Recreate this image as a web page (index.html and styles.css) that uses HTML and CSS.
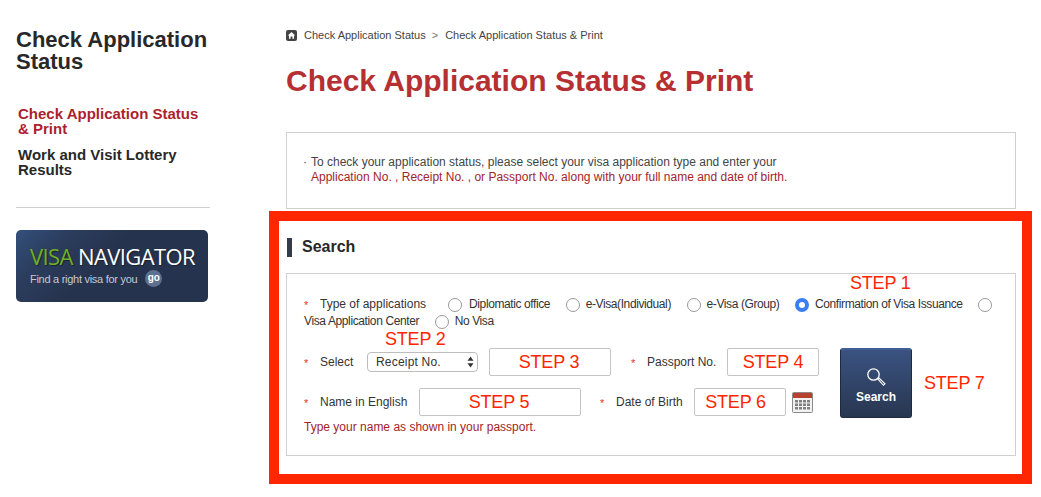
FILE: index.html
```html
<!DOCTYPE html>
<html lang="en">
<head>
<meta charset="utf-8">
<title>Check Application Status &amp; Print</title>
<link rel="stylesheet" href="styles.css">
</head>
<body>
<div class="page">
  <aside class="side">
    <h2 class="side-title">Check Application Status</h2>
    <nav class="side-nav">
      <a class="side-link active">Check Application Status &amp; Print</a>
      <a class="side-link">Work and Visit Lottery Results</a>
    </nav>
    <div class="banner">
      <div class="banner-title"><span class="green">VISA</span> NAVIGATOR</div>
      <div class="banner-sub"><span>Find a right visa for you</span><span class="go">go</span></div>
    </div>
  </aside>
  <main class="main">
    <div class="crumbs">
      <svg class="home" viewBox="0 0 11 11" width="11" height="11"><rect width="11" height="11" rx="2" fill="#444"/><path d="M5.5 2 L9.2 5.4 H8 V8.8 H6.4 V6.6 H4.6 V8.8 H3 V5.4 H1.8 Z" fill="#fff"/></svg>
      <span>Check Application Status</span><span class="sep">&gt;</span><span>Check Application Status &amp; Print</span>
    </div>
    <h1 class="title">Check Application Status &amp; Print</h1>
    <div class="notice">
      <p class="notice-line"><span class="dot">·</span>To check your application status, please select your visa application type and enter your</p>
      <p class="notice-line red-text">Application No. , Receipt No. , or Passport No. along with your full name and date of birth.</p>
    </div>
    <section class="redbox">
      <h3 class="search-head">Search</h3>
      <div class="panel">
        <span class="step step1">STEP 1</span>
        <span class="step step2">STEP 2</span>
        <div class="types">
          <span class="star s-first">*</span><span class="type-label">Type of applications</span><span class="radio r1"></span><span class="opt">Diplomatic office</span><span class="radio"></span><span class="opt">e-Visa(Individual)</span><span class="radio"></span><span class="opt">e-Visa (Group)</span><span class="radio on"></span><span class="opt">Confirmation of Visa Issuance</span><span class="radio"></span><br><span class="opt opt-center">Visa Application Center</span><span class="radio"></span><span class="opt">No Visa</span>
        </div>
        <div class="lower">
          <div class="rows">
            <div class="row row-a">
              <span class="star">*</span><span class="lab lab-select">Select</span>
              <div class="select"><span>Receipt No.</span><svg viewBox="0 0 7 12" width="7" height="12"><path d="M3.5 0.5 L6.5 4.8 H0.5 Z M3.5 11.5 L0.5 7.2 H6.5 Z" fill="#333"/></svg></div>
              <div class="box b-receipt">STEP 3</div>
              <span class="star st-pass">*</span><span class="lab lab-pass">Passport No.</span>
              <div class="box b-pass">STEP 4</div>
            </div>
            <div class="row row-b">
              <span class="star">*</span><span class="lab lab-name">Name in English</span>
              <div class="box b-name">STEP 5</div>
              <span class="star st-dob">*</span><span class="lab lab-dob">Date of Birth</span>
              <div class="box b-dob">STEP 6</div>
              <svg class="cal" viewBox="0 0 21 21" width="21" height="21"><rect x="0.5" y="0.5" width="20" height="20" rx="1" fill="#f2f2f2" stroke="#8a8a8a"/><rect x="1" y="1" width="19" height="5" fill="#b8402f"/><g fill="#808080"><rect x="3" y="8" width="3" height="2.5"/><rect x="7" y="8" width="3" height="2.5"/><rect x="11" y="8" width="3" height="2.5"/><rect x="15" y="8" width="3" height="2.5"/><rect x="3" y="11.5" width="3" height="2.5"/><rect x="7" y="11.5" width="3" height="2.5"/><rect x="11" y="11.5" width="3" height="2.5"/><rect x="15" y="11.5" width="3" height="2.5"/><rect x="3" y="15" width="3" height="2.5"/><rect x="7" y="15" width="3" height="2.5"/><rect x="11" y="15" width="3" height="2.5"/><rect x="15" y="15" width="3" height="2.5"/></g></svg>
            </div>
            <p class="hint">Type your name as shown in your passport.</p>
          </div>
          <button class="btn" type="button">
            <svg viewBox="0 0 20 20" width="20" height="20"><circle cx="7.5" cy="7.5" r="5.7" fill="none" stroke="#fff" stroke-width="1.3"/><path d="M11.8 12 L13 11 L19 16.8 L17.5 18.3 Z" fill="none" stroke="#fff" stroke-width="1.1"/></svg>
            <span>Search</span>
          </button>
          <span class="step step7">STEP 7</span>
        </div>
      </div>
    </section>
  </main>
</div>
</body>
</html>
```
FILE: styles.css
```css
* { box-sizing: border-box; }
html, body { margin: 0; padding: 0; background: #fff; }
body { font-family: "Liberation Sans", Arial, sans-serif; color: #333; }
.page { display: flex; width: 1041px; height: 497px; overflow: hidden; }

.side { width: 269px; flex: none; padding: 29px 59px 0 16px; }
.side-title { margin: 0; font-size: 22px; line-height: 22px; font-weight: bold; color: #282828; }
.side-nav { display: flex; flex-direction: column; gap: 11px; margin-top: 33px; padding: 0 0 30px 2px; border-bottom: 1px solid #d0d0d0; }
.side-link { display: block; font-size: 15px; line-height: 15px; font-weight: bold; color: #282828; }
.side-link.active { color: #ac1f30; }
.banner { width: 192px; height: 72px; margin-top: 22px; padding: 13px 0 0 14px; border-radius: 5px; background: linear-gradient(135deg, #33507c 0%, #2b3c5c 22%, #26334e 45%); color: #fff; }
.banner-title { font-family: "Open Sans", "Liberation Sans", sans-serif; font-size: 22px; line-height: 26px; letter-spacing: -0.6px; white-space: nowrap; text-shadow: 1px 1px 1px rgba(0,0,0,.4); }
.green { color: #6fb020; }
.banner-sub { display: flex; align-items: center; gap: 8px; margin-top: 1px; font-size: 11px; color: #c3cad6; letter-spacing: -0.28px; white-space: nowrap; }
.go { width: 17px; height: 17px; border-radius: 50%; background: #5e7090; color: #fff; font-size: 10px; line-height: 15px; font-weight: bold; text-align: center; letter-spacing: 0; }

.main { flex: none; width: 763px; padding-top: 28px; }
.crumbs { display: flex; align-items: center; height: 14px; margin-left: 17px; font-size: 11px; color: #444; }
.home { margin-right: 7px; }
.sep { margin: 0 7px 0 6px; color: #777; }
.title { margin: 22px 0 0 17px; font-size: 30px; line-height: 34px; font-weight: bold; color: #b52f33; white-space: nowrap; }
.notice { width: 730px; height: 77px; margin: 34px 0 0 17px; padding: 22px 0 0 16px; border: 1px solid #d0d0d0; }
.notice-line { margin: 0; padding-left: 8px; position: relative; font-size: 12px; line-height: 15px; color: #444; }
.dot { position: absolute; left: 0; top: 0; color: #555; }
.red-text { color: #a2242a; }

.redbox { width: 763px; height: 273px; margin-top: 2px; padding: 17px 6px 0 7px; border: 10px solid #ff2600; }
.search-head { margin: 0 0 0 1px; height: 19px; padding-left: 10px; border-left: 5px solid #343b4b; font-size: 16px; line-height: 18px; font-weight: bold; color: #282828; }
.panel { position: relative; height: 183px; margin-top: 16px; padding: 21px 0 0 17px; border: 1px solid #d0d0d0; font-size: 12px; color: #333; }
.step { font-size: 18px; line-height: 20px; letter-spacing: -0.2px; color: #ff2600; white-space: nowrap; }
.step1 { position: absolute; left: 563px; top: -1px; }
.step2 { position: absolute; left: 98px; top: 55px; }

.types { height: 53px; line-height: 16px; white-space: nowrap; letter-spacing: -0.4px; }
.types > * { vertical-align: middle; }
.star { display: inline-block; width: 16px; color: #e8342e; font-size: 11px; line-height: 12px; flex: none; position: relative; top: 1px; }
.type-label { letter-spacing: 0; }
.opt-center { letter-spacing: -0.38px; }
.radio { display: inline-block; width: 14px; height: 14px; margin: 2px 6px 0 15.6px; border: 1px solid #9a9a9a; border-radius: 50%; background: #fff; }
.radio.r1 { margin-left: 22px; margin-right: 7px; }
.radio.on { border: 4.5px solid #3b7ff0; }

.lower { display: flex; align-items: flex-start; }
.rows { width: 536px; flex: none; }
.row { display: flex; align-items: center; height: 28px; }
.row-b { margin-top: 12px; }
.lab { flex: none; white-space: nowrap; }
.lab-select { width: 47px; }
.lab-pass { width: 80px; }
.lab-name { width: 99px; }
.lab-dob { width: 78px; }
.select { display: flex; align-items: center; justify-content: space-between; width: 111px; height: 20px; padding: 0 3px 0 8px; border: 1px solid #bdbdbd; border-radius: 4px; letter-spacing: 0.2px; }
.box { height: 28px; border: 1px solid #c4c4c4; border-radius: 2px; font-size: 18px; line-height: 26px; letter-spacing: -0.2px; text-align: center; color: #ff2600; }
.b-receipt { width: 122px; margin-left: 11px; padding-right: 2px; }
.st-pass { margin-left: 20px; }
.b-pass { width: 92px; }
.b-name { width: 162px; padding-right: 2px; }
.st-dob { margin-left: 19px; }
.b-dob { width: 92px; padding-right: 9px; }
.cal { margin-left: 6px; }
.hint { margin: 4px 0 0; font-size: 12px; line-height: 14px; color: #a2242a; }
.btn { display: flex; flex-direction: column; align-items: center; flex: none; width: 72px; height: 70px; padding: 17px 0 0; border: 1px solid #1f2a40; border-top: 2px solid #3f5f95; border-radius: 3px; background: linear-gradient(180deg, #3a5381 0%, #283650 100%); color: #fff; font: bold 12px/14px "Liberation Sans", Arial, sans-serif; }
.btn span { margin-top: 3px; }
.step7 { margin: 25px 0 0 12px; }
```
